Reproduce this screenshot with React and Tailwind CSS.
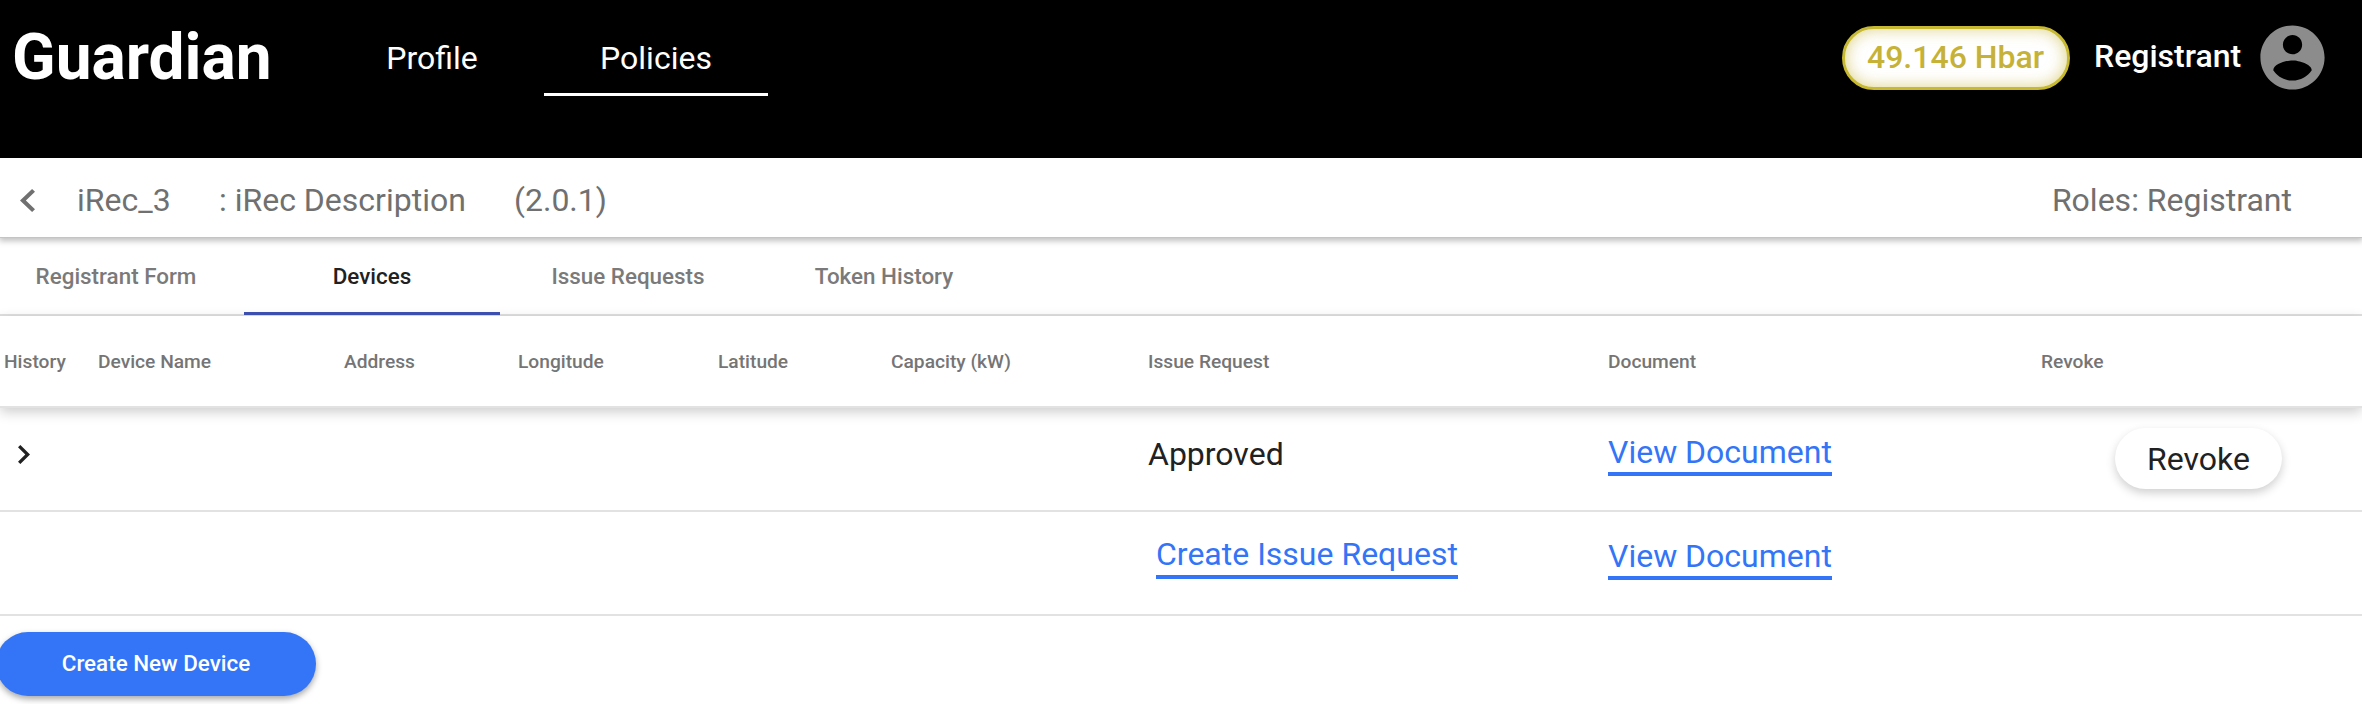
const tabs = [
  { label: 'Registrant Form' },
  { label: 'Devices', active: true },
  { label: 'Issue Requests' },
  { label: 'Token History' },
];

const columns = ['History', 'Device Name', 'Address', 'Longitude', 'Latitude', 'Capacity (kW)', 'Issue Request', 'Document', 'Revoke'];

const grid = 'grid grid-cols-[94px_246px_174px_200px_173px_257px_460px_433px_1fr] pl-1';

function Chevron({ className, left }) {
  return (
    <svg className={className} viewBox="0 0 12 20" fill="currentColor" preserveAspectRatio="none" aria-hidden="true">
      {left ? (
        <path d="M12 2.35 9.65 0 0 10l9.65 10L12 17.65 4.7 10z" />
      ) : (
        <path d="M0 2.35 2.35 0 12 10 2.35 20 0 17.65 7.3 10z" />
      )}
    </svg>
  );
}

function LinkText({ children, tight }) {
  return (
    <a
      className={
        tight
          ? 'block h-10 w-fit whitespace-nowrap border-b-4 border-[#3375f6] leading-[30px] text-[#3375f6]'
          : 'block h-10 w-fit whitespace-nowrap border-b-4 border-[#3375f6] leading-8 text-[#3375f6]'
      }
    >
      {children}
    </a>
  );
}

function Header() {
  return (
    <header className="flex h-[158px] items-start bg-black text-white">
      <div className="ml-[12px] mt-5 w-[308px] text-[64px] font-bold leading-[76px]">Guardian</div>
      <nav className="flex">
        <a className="h-24 w-[224px] pt-[38px] text-center leading-10">Profile</a>
        <a className="h-24 w-[224px] border-b-[3px] border-white pt-[38px] text-center leading-10">Policies</a>
      </nav>
      <div className="ml-auto mt-[26px] flex h-16 w-[228px] items-center justify-center rounded-full border-[3px] border-[#c8b933] bg-white pb-[3px] pr-px font-medium text-[#c6b236] shadow-[inset_0_0_16px_#c6b23699]">
        49.146 Hbar
      </div>
      <div className="ml-6 mt-9 w-[160px] font-medium leading-10">Registrant</div>
      <svg className="mr-[31px] mt-[19px] size-[77px]" viewBox="0 0 24 24" fill="#8c8c8c" aria-hidden="true">
        <path d="M12 2C6.48 2 2 6.48 2 12s4.480 10 10 10 10-4.480 10-10S17.520 2 12 2zm0 3c1.660 0 3 1.340 3 3s-1.340 3-3 3-3-1.340-3-3 1.340-3 3-3zm0 14.200c-2.500 0-4.710-1.280-6-3.220.030-1.990 4-3.080 6-3.080 1.990 0 5.970 1.090 6 3.080-1.290 1.940-3.500 3.220-6 3.220z" />
      </svg>
    </header>
  );
}

export default function App() {
  return (
    <div className="h-[704px] w-[2362px] overflow-hidden bg-white font-[Roboto,sans-serif] text-[32px] text-[#212121]">
      <Header />
      <div className="relative flex h-20 items-center border-b border-[#c4c4c4] pt-[5px] text-[#707070] shadow-[0_2px_6px_1px_#00000040]">
        <Chevron left className="ml-5 h-[23px] w-[15px]" />
        <span className="ml-[42px] w-[142px]">iRec_3</span>
        <span className="w-[295px]">: iRec Description</span>
        <span>(2.0.1)</span>
        <span className="ml-auto mr-[70px]">Roles: Registrant</span>
      </div>

      <div className="-ml-3 flex h-[78px] border-b-2 border-[#e0e0e0] text-[22.4px] font-medium">
        {tabs.map((t) => (
          <div
            key={t.label}
            className={
              t.active
                ? 'h-[77px] w-64 border-b-[3px] border-[#3f51b5] pt-[22px] text-center leading-8 text-[#212121]'
                : 'h-[77px] w-64 pt-[22px] text-center leading-8 text-[#7a7a7a]'
            }
          >
            {t.label}
          </div>
        ))}
      </div>

      <div className={`relative h-[92px] border-b-2 border-[#e2e2e2] pt-[30px] text-[19.2px] font-medium leading-8 text-[#757575] shadow-[0_4px_12px_#00000033] ${grid}`}>
        {columns.map((c) => (
          <span key={c} className="whitespace-nowrap">{c}</span>
        ))}
      </div>

      <div className={`h-[104px] border-b-2 border-[#e2e2e2] ${grid}`}>
        <div className="pl-3.5 pt-[37px]">
          <Chevron className="h-[19px] w-3" />
        </div>
        <div className="col-start-7 pt-[26px] leading-10">Approved</div>
        <div className="pt-7"><LinkText>View Document</LinkText></div>
        <div className="pl-[74px] pt-5">
          <button className="flex h-[61px] w-[167px] items-center justify-center rounded-full bg-white shadow-[0_4px_10px_#00000030]">
            Revoke
          </button>
        </div>
      </div>

      <div className={`h-[104px] border-b-2 border-[#e2e2e2] ${grid}`}>
        <div className="col-start-7 pl-2 pt-[27px]"><LinkText tight>Create Issue Request</LinkText></div>
        <div className="pt-7"><LinkText>View Document</LinkText></div>
      </div>

      <button className="-ml-1 mt-4 flex h-16 w-80 items-center justify-center rounded-full bg-[#3375f6] pb-px text-[22.4px] font-medium text-white shadow-[0_3px_6px_#00000059]">
        Create New Device
      </button>
    </div>
  );
}
